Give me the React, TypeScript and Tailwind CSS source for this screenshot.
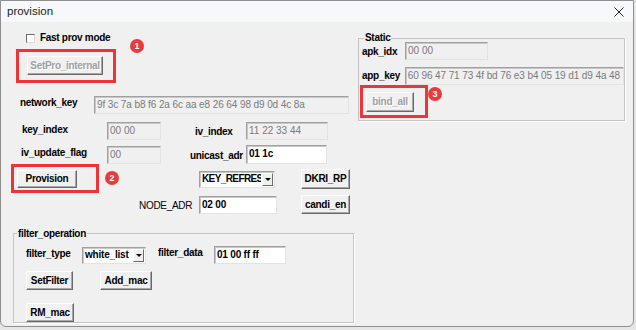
import React from "react";

const label = "text-[10px] font-bold tracking-[-0.3px] leading-none whitespace-nowrap text-black";

function Btn({ className = "", disabled, children }: { className?: string; disabled?: boolean; children: React.ReactNode }) {
  return (
    <div
      className={
        "flex items-center justify-center bg-[#f0f0f0] border border-t-[#fdfdfd] border-l-[#fdfdfd] border-r-[#696969] border-b-[#696969] shadow-[inset_-1px_-1px_0_#a8a8a8] text-[10px] font-bold tracking-[-0.3px] leading-none whitespace-nowrap " +
        (disabled ? "text-[#a0a0a0] [text-shadow:1px_1px_0_#ffffff] " : "text-black ") +
        className
      }
    >
      {children}
    </div>
  );
}

function Field({ className = "", value, disabled }: { className?: string; value: string; disabled?: boolean }) {
  return (
    <div
      className={
        "flex items-start pt-[2px] pl-[2px] overflow-hidden border border-t-[#a0a0a0] border-l-[#a0a0a0] border-r-[#e3e3e3] border-b-[#e3e3e3] shadow-[inset_1px_1px_0_#c8c8c8] text-[10px] leading-[12px] whitespace-nowrap " +
        (disabled ? "bg-[#f0f0f0] text-[#7a7a7a] " : "bg-white text-black font-bold tracking-[-0.2px] ") +
        className
      }
    >
      {value}
    </div>
  );
}

function Combo({ className = "", textClass = "", value }: { className?: string; textClass?: string; value: string }) {
  return (
    <div
      className={
        "flex items-stretch bg-white border border-t-[#a0a0a0] border-l-[#a0a0a0] border-r-[#e3e3e3] border-b-[#e3e3e3] shadow-[inset_1px_1px_0_#c8c8c8] " +
        className
      }
    >
      <div className={"flex-1 overflow-hidden pl-[2px] flex items-center text-[10px] font-bold leading-none whitespace-nowrap " + textClass}>
        {value}
      </div>
      <div className="w-[11px] m-[1px] flex items-center justify-center bg-[#f0f0f0] border border-t-white border-l-white border-r-[#696969] border-b-[#696969]">
        <div className="w-0 h-0 border-l-[3px] border-r-[3px] border-t-[3px] border-l-transparent border-r-transparent border-t-black" />
      </div>
    </div>
  );
}

function Badge({ n, className }: { n: string; className: string }) {
  return (
    <div
      className={
        "absolute w-[14px] h-[14px] rounded-full bg-[#ea3b3b] text-white text-[9px] font-bold leading-none flex items-center justify-center " +
        className
      }
    >
      {n}
    </div>
  );
}

export default function App() {
  return (
    <div className="relative w-[636px] h-[330px] overflow-hidden bg-[#e6e6e6] font-['Liberation_Sans',Arial,sans-serif]">
      {/* dialog window */}
      <div className="w-[634px] h-[327px] flex flex-col border border-[#8f8f8f] rounded-b-[6px] overflow-hidden bg-[#f0f0f0]">
        {/* title bar */}
        <div className="h-[21px] flex items-center justify-between pl-[6px] pr-[9px] bg-[#f6f8fb]">
          <span className="text-[11.5px] text-[#1a1a1a] leading-none">provision</span>
          <svg width="10" height="10" viewBox="0 0 10 10">
            <path d="M0.5 0.5 L9.5 9.5 M9.5 0.5 L0.5 9.5" stroke="#222" strokeWidth="1" />
          </svg>
        </div>

        {/* body */}
        <div className="flex-1 flex">
          {/* left column */}
          <div className="w-[356px] flex flex-col">
            <div className="mt-[10px] ml-[25px] h-[12px] flex items-center gap-[5px]">
              <div className="w-[9px] h-[9px] bg-white border border-t-[#6a6a6a] border-l-[#6a6a6a] border-r-[#dcdcdc] border-b-[#dcdcdc]" />
              <span className={label}>Fast prov mode</span>
            </div>

            <Btn disabled className="mt-[12px] ml-[26px] w-[76px] h-[19px]">SetPro_internal</Btn>

            <div className="mt-[21px] h-[18px] flex items-center">
              <span className={label + " ml-[19px] w-[74px] -mt-[4px]"}>network_key</span>
              <Field disabled className="w-[255px] h-[18px] tracking-[-0.1px]" value="9f 3c 7a b8 f6 2a 6c aa e8 26 64 98 d9 0d 4c 8a" />
            </div>

            <div className="mt-[8px] h-[18px] flex items-center">
              <span className={label + " ml-[21px] w-[85px] -mt-[2px]"}>key_index</span>
              <Field disabled className="w-[54px] h-[18px]" value="00 00" />
              <span className={label + " ml-[34px] w-[51px] mt-[2px]"}>iv_index</span>
              <Field disabled className="w-[82px] h-[18px]" value="11 22 33 44" />
            </div>

            <div className="mt-[5px] h-[19px] flex items-center">
              <span className={label + " ml-[20px] w-[86px] -mt-[4px]"}>iv_update_flag</span>
              <Field disabled className="w-[54px] h-[18px]" value="00" />
              <span className={label + " ml-[29px] w-[56px] mt-[2px]"}>unicast_adr</span>
              <Field className="w-[81px] h-[19px]" value="01 1c" />
            </div>

            <div className="mt-[5px] h-[20px] flex items-center">
              <Btn className="ml-[16px] w-[60px] h-[18px]">Provision</Btn>
              <Combo className="ml-[122px] w-[76px] h-[17px]" textClass="tracking-[-0.6px]" value="KEY_REFRESH" />
              <Btn className="ml-[26px] w-[49px] h-[20px]">DKRI_RP</Btn>
            </div>

            <div className="mt-[6px] h-[19px] flex items-center">
              <span className="ml-[138px] w-[60px] text-[10px] tracking-[-0.3px] leading-none whitespace-nowrap text-black mt-[2px]">NODE_ADR</span>
              <Field className="w-[78px] h-[18px]" value="02 00" />
              <Btn className="ml-[24px] w-[49px] h-[19px]">candi_en</Btn>
            </div>

            {/* filter_operation group */}
            <div className="relative mt-[19px] ml-[12px] w-[341px] h-[90px] border border-[#c4c4c4] shadow-[1px_1px_0_#ffffff] flex flex-col">
              <span className={label + " absolute -top-[5px] left-[3px] px-[1px] bg-[#f0f0f0]"}>filter_operation</span>
              <div className="mt-[12px] h-[18px] flex items-center">
                <span className={label + " ml-[12px] w-[56px] -mt-[3px]"}>filter_type</span>
                <Combo className="w-[64px] h-[17px]" textClass="tracking-[-0.2px]" value="white_list" />
                <span className={label + " ml-[12px] w-[56px] -mt-[4px]"}>filter_data</span>
                <Field className="w-[72px] h-[18px]" value="01 00 ff ff" />
              </div>
              <div className="mt-[7px] flex items-center">
                <Btn className="ml-[12px] w-[47px] h-[19px]">SetFilter</Btn>
                <Btn className="ml-[27px] w-[52px] h-[19px]">Add_mac</Btn>
              </div>
              <Btn className="mt-[13px] ml-[12px] w-[48px] h-[19px]">RM_mac</Btn>
            </div>
          </div>

          {/* right column */}
          <div className="flex flex-col">
            <div className="relative mt-[16px] ml-[1px] w-[267px] h-[83px] border border-[#c4c4c4] shadow-[1px_1px_0_#ffffff] flex flex-col">
              <span className={label + " absolute -top-[6px] left-[5px] px-[1px] bg-[#f0f0f0]"}>Static</span>
              <div className="mt-[3px] h-[18px] flex items-start">
                <span className={label + " ml-[3px] w-[43px] mt-[5px]"}>apk_idx</span>
                <Field disabled className="w-[83px] h-[18px]" value="00 00" />
              </div>
              <div className="mt-[7px] h-[18px] flex items-center">
                <span className={label + " ml-[3px] w-[43px]"}>app_key</span>
                <Field disabled className="w-[220px] h-[18px] tracking-[-0.1px]" value="60 96 47 71 73 4f bd 76 e3 b4 05 19 d1 d9 4a 48" />
              </div>
              <Btn disabled className="mt-[7px] ml-[7px] w-[48px] h-[20px]">bind_all</Btn>
            </div>
          </div>
        </div>
      </div>

      {/* annotation overlays */}
      <div className="absolute left-[16px] top-[49px] w-[100px] h-[34px] border-[3px] border-[#ee3434]" />
      <Badge n="1" className="left-[130px] top-[39px]" />
      <div className="absolute left-[11px] top-[164px] w-[88px] h-[29px] border-[3px] border-[#ee3434]" />
      <Badge n="2" className="left-[105px] top-[171px]" />
      <div className="absolute left-[360px] top-[85px] w-[68px] h-[33px] border-[3px] border-[#ee3434]" />
      <Badge n="3" className="left-[428px] top-[87px]" />
    </div>
  );
}
